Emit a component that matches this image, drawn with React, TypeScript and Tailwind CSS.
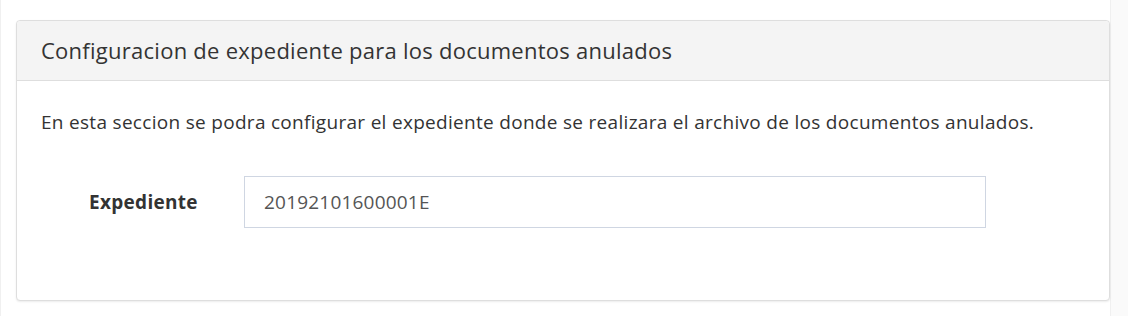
export default function App() {
  return (
    <div className="min-h-[316px] w-[1128px] bg-[#fafafa] font-['Open_Sans',sans-serif] text-[#333]">
      <div className="mr-[17px] min-h-[316px] border-l border-r border-[#f0f0f0] bg-white pt-5 pl-[15px] pb-4">
        <div className="rounded-[4px] border border-[#dedede] bg-white shadow-[0_1px_2px_rgba(0,0,0,0.08)]">
          <div className="flex h-[60px] items-center rounded-t-[4px] border-b border-[#dedede] bg-[#f4f4f4] px-6">
            <h2 className="text-[22px] font-normal tracking-[0.26px] text-[#333]">
              Configuracion de expediente para los documentos anulados
            </h2>
          </div>
          <div className="px-6 pt-[28px] pb-[72px]">
            <p className="text-[19px] leading-[26px] tracking-[0.3px]">
              En esta seccion se podra configurar el expediente donde se realizara el archivo de los documentos anulados.
            </p>
            <div className="mt-[41px] flex items-center">
              <label className="w-[203px] pl-12 text-[19px] font-bold tracking-[0.3px] text-[#333]">Expediente</label>
              <input
                readOnly
                value="20192101600001E"
                className="h-[52px] w-[742px] border border-[#cfd6e2] bg-white px-[19px] text-[19px] tracking-[0.2px] text-[#555] outline-none"
              />
            </div>
          </div>
        </div>
      </div>
    </div>
  );
}
